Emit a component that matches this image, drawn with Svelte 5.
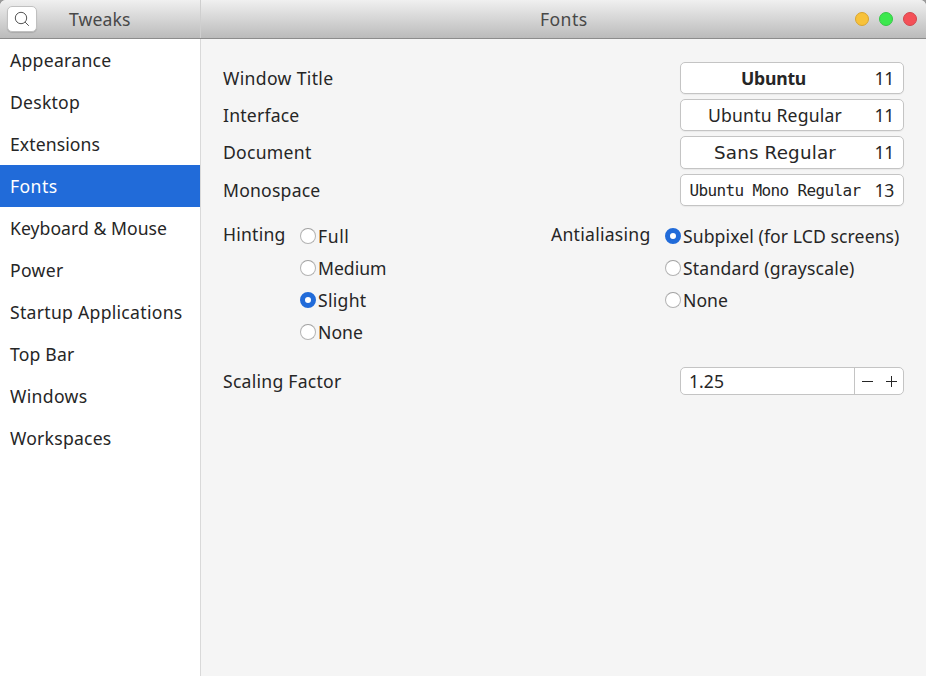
<script>
  const pages = [
    ['Appearance', 101.5], ['Desktop', 70], ['Extensions', 90], ['Fonts', 47.5],
    ['Keyboard & Mouse', 157], ['Power', 53.5], ['Startup Applications', 172.5],
    ['Top Bar', 64.5], ['Windows', 77.5], ['Workspaces', 101.5]
  ];
  const fonts = [
    { label: 'Window Title', lw: 110.5, name: 'Ubuntu', w: 65, size: 11, kind: 'bold' },
    { label: 'Interface', lw: 76.5, name: 'Ubuntu Regular', w: 134, size: 11, kind: '' },
    { label: 'Document', lw: 88.5, name: 'Sans Regular', w: 122, size: 11, kind: 'sans' },
    { label: 'Monospace', lw: 97.5, name: 'Ubuntu Mono Regular', w: 171, size: 13, kind: 'mono' }
  ];
  const hintings = [['Full', 31.5], ['Medium', 68.5], ['Slight', 48.5], ['None', 45]];
  const aliasings = [['Subpixel (for LCD screens)', 216.5], ['Standard (grayscale)', 171.5], ['None', 45]];
  let page = $state('Fonts');
  let hinting = $state('Slight');
  let aliasing = $state('Subpixel (for LCD screens)');
  let scale = $state(1.25);

  // Tracks the label out or in so that it fills the given width.
  function fit(node, width) {
    const natural = node.getBoundingClientRect().width;
    node.style.letterSpacing = (width - natural) / node.textContent.length + 'px';
  }
</script>

{#snippet text(value, width)}<span class="text" use:fit={width}>{value}</span>{/snippet}

{#snippet radio(value, width, on, pick)}
  <button class="option" onclick={pick}>
    <i class="radio" class:on></i>{@render text(value, width)}
  </button>
{/snippet}

<div class="window">
  <header>
    <div class="side-head">
      <button class="search" aria-label="Search">
        <svg width="16" height="16" viewBox="0 0 16 16" fill="none" stroke="#555" stroke-width="1">
          <circle cx="7" cy="7" r="5.7" /><path d="M11.1 11.1 14.8 14.8" />
        </svg>
      </button>
      <div class="title">{@render text('Tweaks', 61.5)}</div>
    </div>
    <div class="main-head">
      <div class="title">{@render text('Fonts', 47.5)}</div>
      <div class="controls"><i class="min"></i><i class="max"></i><i class="close"></i></div>
    </div>
  </header>
  <div class="body">
    <nav>
      {#each pages as [name, w]}
        <button class:active={name === page} onclick={() => (page = name)}>{@render text(name, w)}</button>
      {/each}
    </nav>
    <main>
      <div class="fonts">
        {#each fonts as f}
          <div class="row">
            <div class="label">{@render text(f.label, f.lw)}</div>
            <button class="font {f.kind}">
              <span class="name">{@render text(f.name, f.w)}</span>
              <span class="size">{@render text(f.size, 19.5)}</span>
            </button>
          </div>
        {/each}
      </div>
      <div class="groups">
        <div class="group">
          <div class="caption">{@render text('Hinting', 62.5)}</div>
          <div class="options">
            {#each hintings as [v, w]}{@render radio(v, w, v === hinting, () => (hinting = v))}{/each}
          </div>
        </div>
        <div class="group second">
          <div class="caption">{@render text('Antialiasing', 99.5)}</div>
          <div class="options">
            {#each aliasings as [v, w]}{@render radio(v, w, v === aliasing, () => (aliasing = v))}{/each}
          </div>
        </div>
      </div>
      <div class="row scaling">
        {@render text('Scaling Factor', 118.5)}
        <div class="spin">
          <div class="value">{#key scale}{@render text(scale.toFixed(2), 35)}{/key}</div>
          <div class="steps">
            <button aria-label="Decrease" onclick={() => (scale -= 0.01)}>
              <svg width="11" height="11"><path d="M0 5.5H11" /></svg>
            </button>
            <button aria-label="Increase" onclick={() => (scale += 0.01)}>
              <svg width="11" height="11"><path d="M0 5.5H11M5.5 0V11" /></svg>
            </button>
          </div>
        </div>
      </div>
    </main>
  </div>
</div>

<style>
  :global(body) { background: #999; }
  .window, .window * { box-sizing: border-box; }
  .window {
    width: 926px; height: 676px; display: flex; flex-direction: column; overflow: hidden;
    border-radius: 6px 6px 0 0; background: #f5f5f5; color: #262626;
    font: 17.6px/24px "Noto Sans", sans-serif;
  }
  button { font: inherit; color: inherit; margin: 0; padding: 0; border: 0; background: none; }
  .text { display: inline-block; white-space: nowrap; }
  header {
    height: 39px; flex: none; display: flex; color: #484848;
    background: linear-gradient(#f0f0f0, #bbb); border-bottom: 1px solid #8c8c8c;
  }
  .side-head { width: 201px; display: flex; align-items: center; padding-left: 7px; border-right: 1px solid #cfcfcf; }
  .search {
    width: 30px; height: 26px; display: grid; place-items: center; background: #fff;
    border: 1px solid #c0c0c0; border-radius: 5px; box-shadow: 0 1px 1px #0002;
  }
  .side-head .title { margin-left: 32px; }
  .main-head { flex: 1; display: flex; align-items: center; padding: 0 9px 0 339px; }
  .controls { margin-left: auto; display: flex; gap: 10px; }
  .controls i { width: 14px; height: 14px; border-radius: 50%; border: 1px solid #d9a52f; background: #f8c23a; }
  .controls .max { background: #3ce84e; border-color: #35c747; }
  .controls .close { background: #f45058; border-color: #d2464d; }
  .body { flex: 1; display: flex; }
  nav { width: 201px; flex: none; background: #fff; border-right: 1px solid #d9d9d9; display: flex; flex-direction: column; }
  nav button { height: 42px; padding-left: 10px; text-align: left; }
  nav .active { background: #216bd9; color: #fff; }
  main { flex: 1; padding: 23px 22px 0; }
  .fonts { display: flex; flex-direction: column; gap: 5px; }
  .row { display: flex; align-items: center; justify-content: space-between; }
  .fonts .row { align-items: flex-start; }
  .label { padding-top: 4px; }
  .font {
    width: 224px; height: 32px; display: flex; align-items: flex-start; padding: 3px 9px 0 8px;
    background: #fff; border: 1px solid #c4c4c4; border-radius: 5px; box-shadow: 0 1px 1px #0000000d;
  }
  .name { flex: 1; text-align: center; }
  .size { width: 33px; text-align: right; }
  .bold .name { font-weight: 700; padding-right: 3px; }
  .font.sans { height: 33px; }
  .sans .name { font-family: "DejaVu Sans", sans-serif; font-size: 18.3px; padding-top: 1px; }
  .mono .name { font: 16px/24px "DejaVu Sans Mono", monospace; padding-top: 1px; }
  .groups { display: flex; margin-top: 14px; height: 128px; }
  .group { display: flex; width: 328px; flex: none; }
  .caption { width: 77px; flex: none; padding-top: 2px; }
  .second .caption { width: 114px; }
  .options { display: flex; flex-direction: column; }
  .option { height: 32px; display: flex; align-items: center; gap: 2px; white-space: nowrap; }
  .radio { width: 16px; height: 16px; flex: none; border-radius: 50%; background: #fff; border: 1px solid #b3b3b3; border-top-color: #a0a0a0; }
  .radio.on { border: 5px solid #216bd9; }
  .scaling { margin-top: 19px; }
  .spin { width: 224px; height: 28px; display: flex; background: #fff; border: 1px solid #c4c4c4; border-radius: 5px; }
  .value { flex: 1; display: flex; align-items: center; padding-left: 8px; }
  .steps { width: 49px; display: flex; border-left: 1px solid #c4c4c4; }
  .steps button { flex: 1; display: grid; place-items: center start; padding-left: 7px; }
  .steps svg { display: block; }
  .steps path { stroke: #262626; stroke-width: 1; }
</style>
